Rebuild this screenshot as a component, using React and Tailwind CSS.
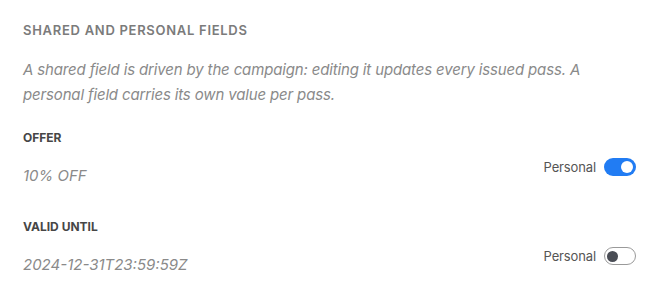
export default function App() {
  const font = { fontFamily: 'Inter, "Noto Sans", sans-serif' };
  return (
    <div className="w-[660px] h-[303px] bg-white overflow-hidden" style={font}>
      <div className="flex flex-col px-[23px] pt-[22px] pr-[24px]">
        <div className="text-[13px] leading-[16px] font-semibold tracking-[0.055em] text-[#7b7b7b] uppercase">
          Shared and personal fields
        </div>
        <p className="mt-[19px] text-[15px] leading-[25px] italic tracking-[-0.01em] text-[#8a8a8a]">
          A shared field is driven by the campaign: editing it updates every issued pass. A personal field carries its own value per pass.
        </p>
        <div className="mt-[23px] text-[12px] leading-[16px] font-bold text-[#464646] uppercase">Offer</div>
        <div className="flex justify-between items-start">
          <div className="mt-[18px] text-[15px] leading-[24px] italic text-[#8a8a8a]">10% OFF</div>
          <div className="mt-[12px] flex items-center gap-[8px]">
            <span className="text-[13px] leading-[18px] tracking-[-0.01em] text-[#555]">Personal</span>
            <div className="w-[32px] h-[18px] rounded-full bg-[#217cf3] flex items-center justify-end pr-[3px]">
              <div className="w-[12px] h-[12px] rounded-full bg-white" />
            </div>
          </div>
        </div>
        <div className="mt-[31px] text-[12px] leading-[16px] font-bold text-[#464646] uppercase">Valid until</div>
        <div className="flex justify-between items-start">
          <div className="mt-[18px] text-[15px] leading-[24px] italic text-[#8a8a8a]">2024-12-31T23:59:59Z</div>
          <div className="mt-[12px] flex items-center gap-[8px]">
            <span className="text-[13px] leading-[18px] tracking-[-0.01em] text-[#555]">Personal</span>
            <div className="w-[32px] h-[18px] rounded-full border border-[#9a9a9a] bg-white flex items-center justify-start pl-[2px]">
              <div className="w-[11px] h-[11px] rounded-full bg-[#4a4d55]" />
            </div>
          </div>
        </div>
      </div>
    </div>
  );
}
